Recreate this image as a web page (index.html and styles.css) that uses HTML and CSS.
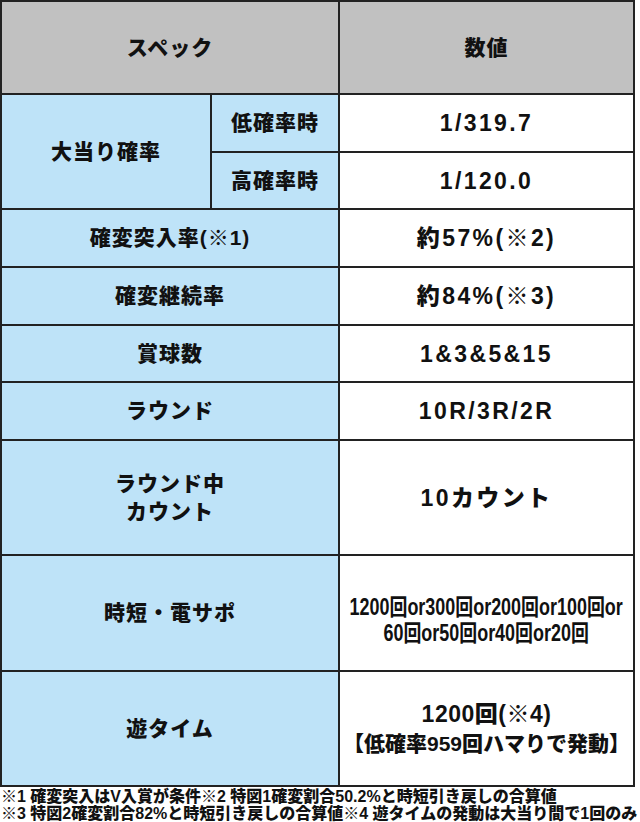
FILE: index.html
```html
<!DOCTYPE html>
<html lang="ja">
<head>
<meta charset="utf-8">
<link rel="stylesheet" href="styles.css">
</head>
<body>
<div class="spec">
  <div class="cell head span2">スペック</div>
  <div class="cell head">数値</div>

  <div class="cell label rows2">大当り確率</div>
  <div class="cell label">低確率時</div>
  <div class="cell value">1/319.7</div>
  <div class="cell label">高確率時</div>
  <div class="cell value">1/120.0</div>

  <div class="cell label span2">確変突入率(※1)</div>
  <div class="cell value">約57%(※2)</div>

  <div class="cell label span2">確変継続率</div>
  <div class="cell value">約84%(※3)</div>

  <div class="cell label span2">賞球数</div>
  <div class="cell value">1&amp;3&amp;5&amp;15</div>

  <div class="cell label span2">ラウンド</div>
  <div class="cell value">10R/3R/2R</div>

  <div class="cell label span2">ラウンド中<br>カウント</div>
  <div class="cell value">10カウント</div>

  <div class="cell label span2">時短・電サポ</div>
  <div class="cell value lower"><span class="cond">1200回or300回or200回or100回or<br>60回or50回or40回or20回</span></div>

  <div class="cell label span2">遊タイム</div>
  <div class="cell value two"><span class="l1">1200回(※4)</span><span class="l2">【低確率959回ハマりで発動】</span></div>
</div>
<div class="notes">
  <p>※1 確変突入はV入賞が条件※2 特図1確変割合50.2%と時短引き戻しの合算値</p>
  <p>※3 特図2確変割合82%と時短引き戻しの合算値※4 遊タイムの発動は大当り間で1回のみ</p>
</div>
</body>
</html>
```
FILE: styles.css
```css
html, body {
  margin: 0;
  padding: 0;
  background: #ffffff;
}
body {
  width: 640px;
  font-family: "Liberation Sans", "Noto Sans CJK JP", sans-serif;
  font-weight: 900;
  color: #111111;
}
.spec {
  width: 635px;
  box-sizing: border-box;
  padding: 2px;
  background: #222222;
  display: grid;
  grid-template-columns: 208px 126px 293px;
  grid-template-rows: 91px 56px 55px 56px 56px 55px 56px 113px 114px 113px;
  gap: 2px;
}
.cell {
  display: flex;
  align-items: center;
  justify-content: center;
  text-align: center;
  font-size: 21px;
  line-height: 28px;
  letter-spacing: 1px;
}
.head {
  background: #c1c1c1;
}
.label {
  background: #bee3f8;
}
.value {
  background: #ffffff;
  font-size: 23px;
  letter-spacing: 2.4px;
}
.span2 {
  grid-column: span 2;
}
.rows2 {
  grid-row: span 2;
}
.lower {
  padding-top: 14px;
}
.cond {
  display: inline-block;
  font-weight: 700;
  font-size: 23px;
  letter-spacing: 0;
  line-height: 26px;
  transform: scaleX(0.78);
  white-space: nowrap;
}
.two {
  flex-direction: column;
  letter-spacing: 0;
  white-space: nowrap;
}
.l1 {
  font-size: 23px;
  line-height: 29px;
  letter-spacing: 0.5px;
}
.l2 {
  font-size: 21px;
  line-height: 29px;
}
.notes {
  padding: 1px 0 0 1px;
}
.notes p {
  margin: 0;
  font-size: 16px;
  line-height: 17px;
  white-space: nowrap;
}
```
